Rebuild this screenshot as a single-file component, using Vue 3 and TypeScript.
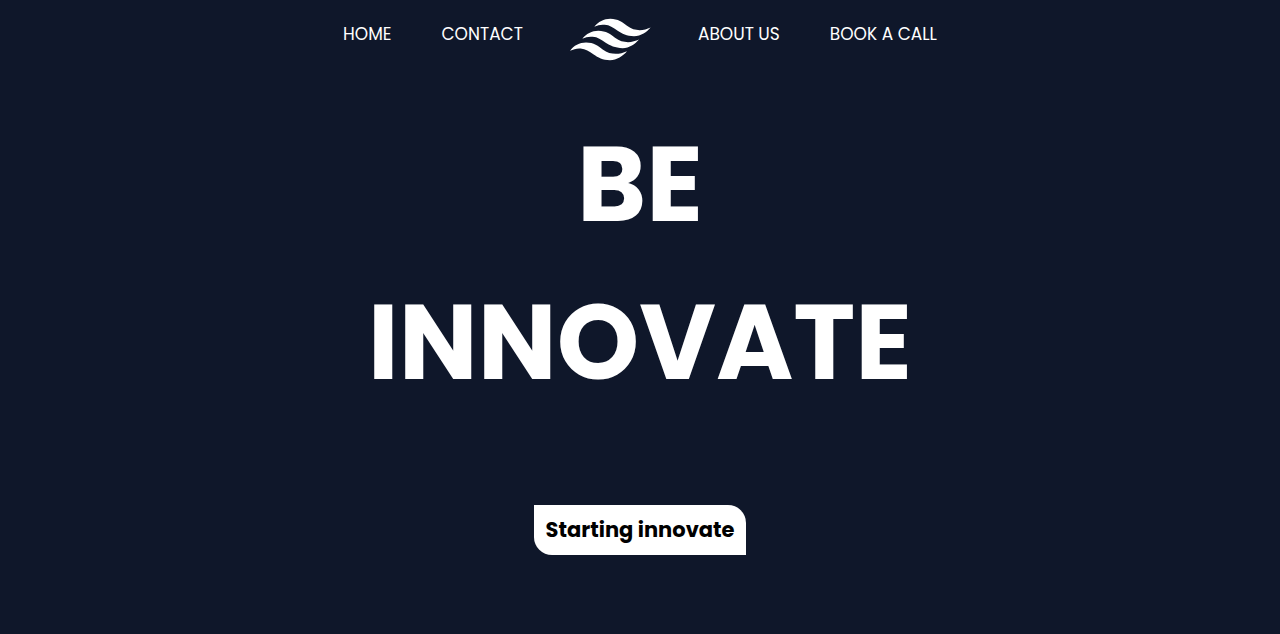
<script setup lang="ts">
interface NavLink {
  label: string
  href: string
}

const leftLinks: NavLink[] = [
  { label: 'HOME', href: '#home' },
  { label: 'CONTACT', href: '#contact' },
]

const rightLinks: NavLink[] = [
  { label: 'ABOUT US', href: '#about' },
  { label: 'BOOK A CALL', href: '#book' },
]
</script>

<template>
  <div class="page">
    <header>
      <nav class="nav" aria-label="Main">
        <div class="links">
          <a v-for="link in leftLinks" :key="link.label" :href="link.href">{{ link.label }}</a>
        </div>
        <svg class="logo" viewBox="30 30 243 128" role="img" aria-label="Waves">
          <path d="M103 56C114 41 132 32 151 32C174 32 188 43 201 53C214 63 226 66 239 66C251 66 261 63 272 58C261 71 243 84 222 84C200 84 186 77 173 68C159 58 149 51 134 50C122 49 113 51 103 56Z" />
          <path d="M67 92C78 77 96 68 115 68C138 68 153 79 165 89C178 99 191 102 204 102C216 102 227 98 237 94C226 107 208 120 188 120C165 120 150 112 137 104C123 94 113 87 98 86C86 85 77 87 67 92Z" />
          <path d="M30 128C41 112 59 103 78 103C101 103 116 114 128 124C141 134 154 137 167 137C179 137 190 134 201 129C190 142 170 156 150 156C128 156 114 148 101 139C87 130 77 122 62 121C50 120 41 123 30 128Z" />
        </svg>
        <div class="links">
          <a v-for="link in rightLinks" :key="link.label" :href="link.href">{{ link.label }}</a>
        </div>
      </nav>
    </header>
    <main class="hero">
      <h1>
        <span>BE</span>
        <span>INNOVATE</span>
      </h1>
      <button type="button" class="cta">Starting innovate</button>
    </main>
  </div>
</template>

<style>
body {
  background: #0f172a;
}
</style>

<style scoped>
.page {
  min-height: 100vh;
  box-sizing: border-box;
  background: #0f172a;
  color: #fff;
  font-family: Poppins, Inter, sans-serif;
}

.nav {
  display: flex;
  justify-content: center;
  align-items: center;
  gap: 47px;
  padding-top: 18px;
}

.links {
  display: flex;
  gap: 50px;
  padding-bottom: 12px;
}

.links a {
  color: inherit;
  font-size: 17px;
  line-height: 24px;
  text-decoration: none;
  white-space: nowrap;
}

.logo {
  width: 81px;
  height: 43px;
  fill: #fff;
}

.hero {
  display: flex;
  flex-direction: column;
  align-items: center;
  padding-top: 45px;
}

h1 {
  margin: 0;
  font-size: 105px;
  font-weight: 700;
  line-height: 158px;
  text-align: center;
}

h1 span {
  display: block;
}

.cta {
  margin-top: 83px;
  padding: 8px 11px;
  border: 0;
  border-radius: 0 18px;
  background: #fff;
  color: #000;
  font-family: inherit;
  font-size: 21px;
  font-weight: 700;
  line-height: 34px;
  cursor: pointer;
}
</style>
